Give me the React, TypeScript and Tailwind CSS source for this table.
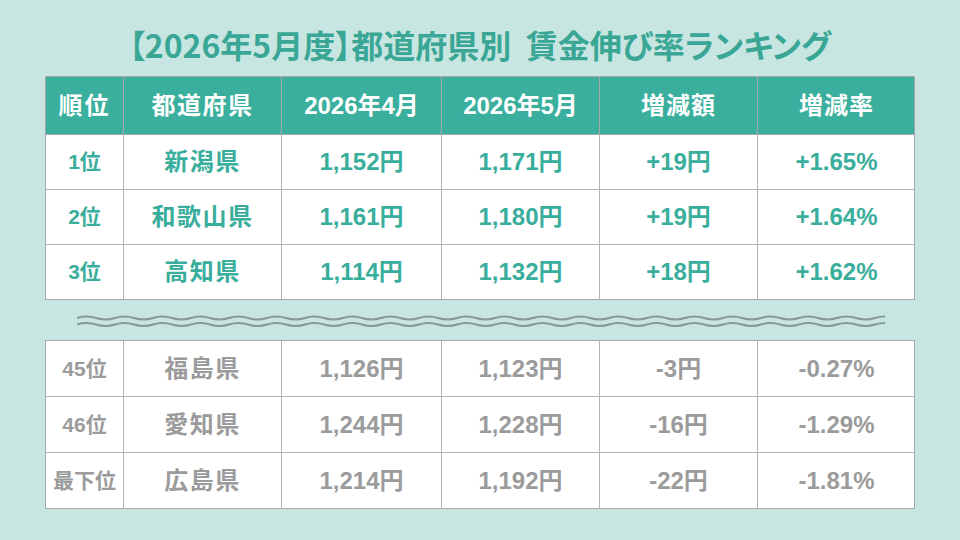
import React from "react";

const FONT = { fontFamily: '"Liberation Sans", "Noto Sans CJK JP", sans-serif' };

type Row = { rank: string; pref: string; apr: string; may: string; diff: string; rate: string };

const top: Row[] = [
  { rank: "1位", pref: "新潟県", apr: "1,152円", may: "1,171円", diff: "+19円", rate: "+1.65%" },
  { rank: "2位", pref: "和歌山県", apr: "1,161円", may: "1,180円", diff: "+19円", rate: "+1.64%" },
  { rank: "3位", pref: "高知県", apr: "1,114円", may: "1,132円", diff: "+18円", rate: "+1.62%" },
];

const bottom: Row[] = [
  { rank: "45位", pref: "福島県", apr: "1,126円", may: "1,123円", diff: "-3円", rate: "-0.27%" },
  { rank: "46位", pref: "愛知県", apr: "1,244円", may: "1,228円", diff: "-16円", rate: "-1.29%" },
  { rank: "最下位", pref: "広島県", apr: "1,214円", may: "1,192円", diff: "-22円", rate: "-1.81%" },
];

const COLS = "grid grid-cols-[77px_158px_160px_158px_158px_158px]";

function Cells({ row, tone, h }: { row: Row; tone: "up" | "down"; h: string }) {
  const color = tone === "up" ? "text-[#3aae9c]" : "text-[#9b9b9b]";
  const cell = `flex ${h} items-center justify-center border-[#b3b3b3] font-bold ${color}`;
  return (
    <div className={`${COLS} border-t border-[#b3b3b3] first:border-t-0`}>
      <div className={`${cell} text-[21px]`}>{row.rank}</div>
      <div className={`${cell} border-l text-[24px] tracking-[1.5px]`}>{row.pref}</div>
      <div className={`${cell} border-l text-[24px]`}>{row.apr}</div>
      <div className={`${cell} border-l text-[24px]`}>{row.may}</div>
      <div className={`${cell} border-l text-[24px]`}>{row.diff}</div>
      <div className={`${cell} border-l text-[24px]`}>{row.rate}</div>
    </div>
  );
}

// 二重の波線（上位と下位の区切り）
function Wave() {
  let d1 = "M0 3";
  let d2 = "M0 9.5";
  for (let x = 0; x < 808; x += 38) {
    d1 += " q9.5 -3 19 0 t19 0";
    d2 += " q9.5 -3 19 0 t19 0";
  }
  return (
    <svg width="808" height="13" viewBox="0 0 808 13" className="block">
      <path d={d1} fill="none" stroke="#869893" strokeWidth="2" />
      <path d={d2} fill="none" stroke="#869893" strokeWidth="2" />
    </svg>
  );
}

export default function App() {
  const head =
    "flex h-[57px] items-center justify-center border-l border-[#a9a9a9] text-[24px] font-bold text-white first:border-l-0";
  return (
    <div className="flex h-[540px] w-[960px] flex-col items-center bg-[#c8e6e1]" style={FONT}>
      <h1
        className="mt-[23px] h-[42px] text-[32px] font-bold leading-[42px] text-[#3aa796]"
        style={{ fontFamily: '"Noto Sans CJK JP", sans-serif', fontFeatureSettings: '"palt"' }}
      >
        【2026年5月度】都道府県別&nbsp;&nbsp;賃金伸び率ランキング
      </h1>
      <div className="mt-[11px] w-[870px] border border-[#a9a9a9] bg-white">
        <div className={`${COLS} bg-[#3aaf9e]`}>
          <div className={`${head} tracking-[2px]`}>順位</div>
          <div className={`${head} tracking-[1.5px]`}>都道府県</div>
          <div className={head}>2026年4月</div>
          <div className={head}>2026年5月</div>
          <div className={`${head} tracking-[1px]`}>増減額</div>
          <div className={`${head} tracking-[1px]`}>増減率</div>
        </div>
        <div className="border-t border-[#a9a9a9]">
          {top.map((r) => (
            <Cells key={r.rank} row={r} tone="up" h="h-[54px]" />
          ))}
        </div>
      </div>
      <div className="mt-[15px] mb-[12px] pl-[2px]">
        <Wave />
      </div>
      <div className="w-[870px] border border-[#a9a9a9] bg-white">
        {bottom.map((r) => (
          <Cells key={r.rank} row={r} tone="down" h="h-[55px]" />
        ))}
      </div>
    </div>
  );
}
